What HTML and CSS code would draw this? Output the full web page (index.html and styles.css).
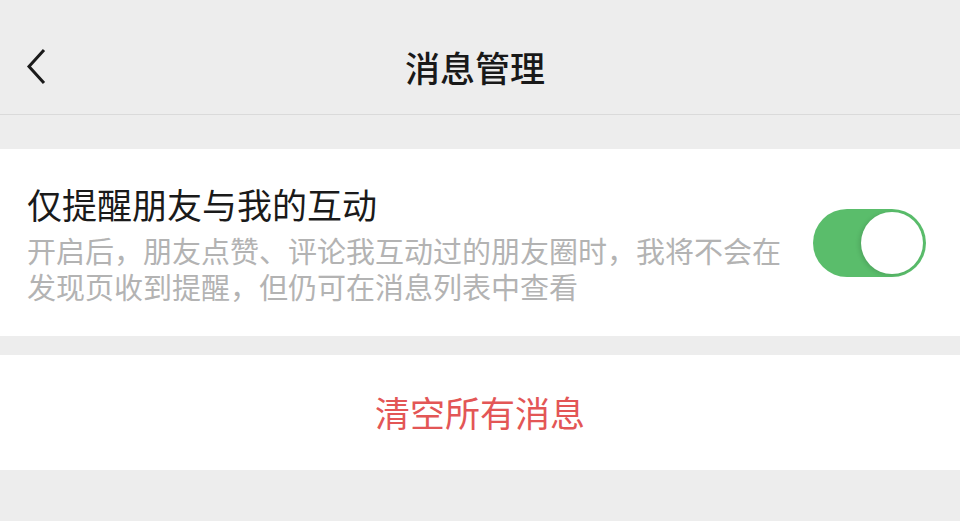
FILE: index.html
```html
<!DOCTYPE html>
<html lang="zh-CN">
<head>
<meta charset="utf-8">
<title>消息管理</title>
<link rel="stylesheet" href="styles.css">
</head>
<body>
<div class="page">
  <header class="navbar">
    <div class="nav-side">
      <svg class="back" width="24" height="40" viewBox="0 0 24 40" aria-hidden="true">
        <path d="M19 3 L4 19.5 L19 36" fill="none" stroke="#1a1a1a" stroke-width="3" stroke-linecap="butt" stroke-linejoin="miter"/>
      </svg>
    </div>
    <h1 class="nav-title">消息管理</h1>
    <div class="nav-side"></div>
  </header>

  <section class="card setting">
    <div class="setting-text">
      <div class="setting-title">仅提醒朋友与我的互动</div>
      <div class="setting-desc">开启后，朋友点赞、评论我互动过的朋友圈时，我将不会在发现页收到提醒，但仍可在消息列表中查看</div>
    </div>
    <div class="switch on"><span class="knob"></span></div>
  </section>

  <section class="card action">
    <span class="danger">清空所有消息</span>
  </section>
</div>
</body>
</html>
```

FILE: styles.css
```css
html, body {
  margin: 0;
  padding: 0;
  background: #ededed;
}
body {
  font-family: "Noto Sans CJK SC", "Noto Sans", sans-serif;
  color: #1a1a1a;
}
.page {
  width: 960px;
  height: 521px;
  overflow: hidden;
  background: #ededed;
}
.navbar {
  height: 115px;
  box-sizing: border-box;
  padding-top: 20px;
  border-bottom: 1px solid #dadada;
  display: flex;
  align-items: center;
}
.nav-side {
  width: 140px;
  display: flex;
  align-items: center;
  padding-left: 25px;
  box-sizing: border-box;
}
.back {
  display: block;
}
.nav-title {
  flex: 1;
  margin: 0;
  text-align: center;
  font-size: 35px;
  font-weight: 500;
  line-height: 44px;
  margin-right: 10px;
  color: #191919;
}
.card {
  background: #ffffff;
}
.setting {
  margin-top: 34px;
  height: 187px;
  box-sizing: border-box;
  padding: 0 34px 0 27px;
  display: flex;
  align-items: center;
}
.setting-text {
  width: 760px;
  margin-right: 26px;
}
.setting-title {
  font-size: 35px;
  line-height: 44px;
  color: #1a1a1a;
}
.setting-desc {
  margin-top: 6px;
  font-size: 29px;
  line-height: 36px;
  color: #b3b3b3;
}
.switch {
  width: 113px;
  height: 68px;
  border-radius: 34px;
  background: #5abd6b;
  position: relative;
  flex: none;
}
.knob {
  position: absolute;
  top: 3px;
  right: 3px;
  width: 62px;
  height: 62px;
  border-radius: 50%;
  background: #ffffff;
  box-shadow: -2px 1px 4px rgba(0, 0, 0, 0.12);
}
.action {
  margin-top: 19px;
  height: 115px;
  display: flex;
  align-items: center;
  justify-content: center;
}
.danger {
  font-size: 35px;
  line-height: 44px;
  color: #e35656;
  margin-top: -2px;
}
```
